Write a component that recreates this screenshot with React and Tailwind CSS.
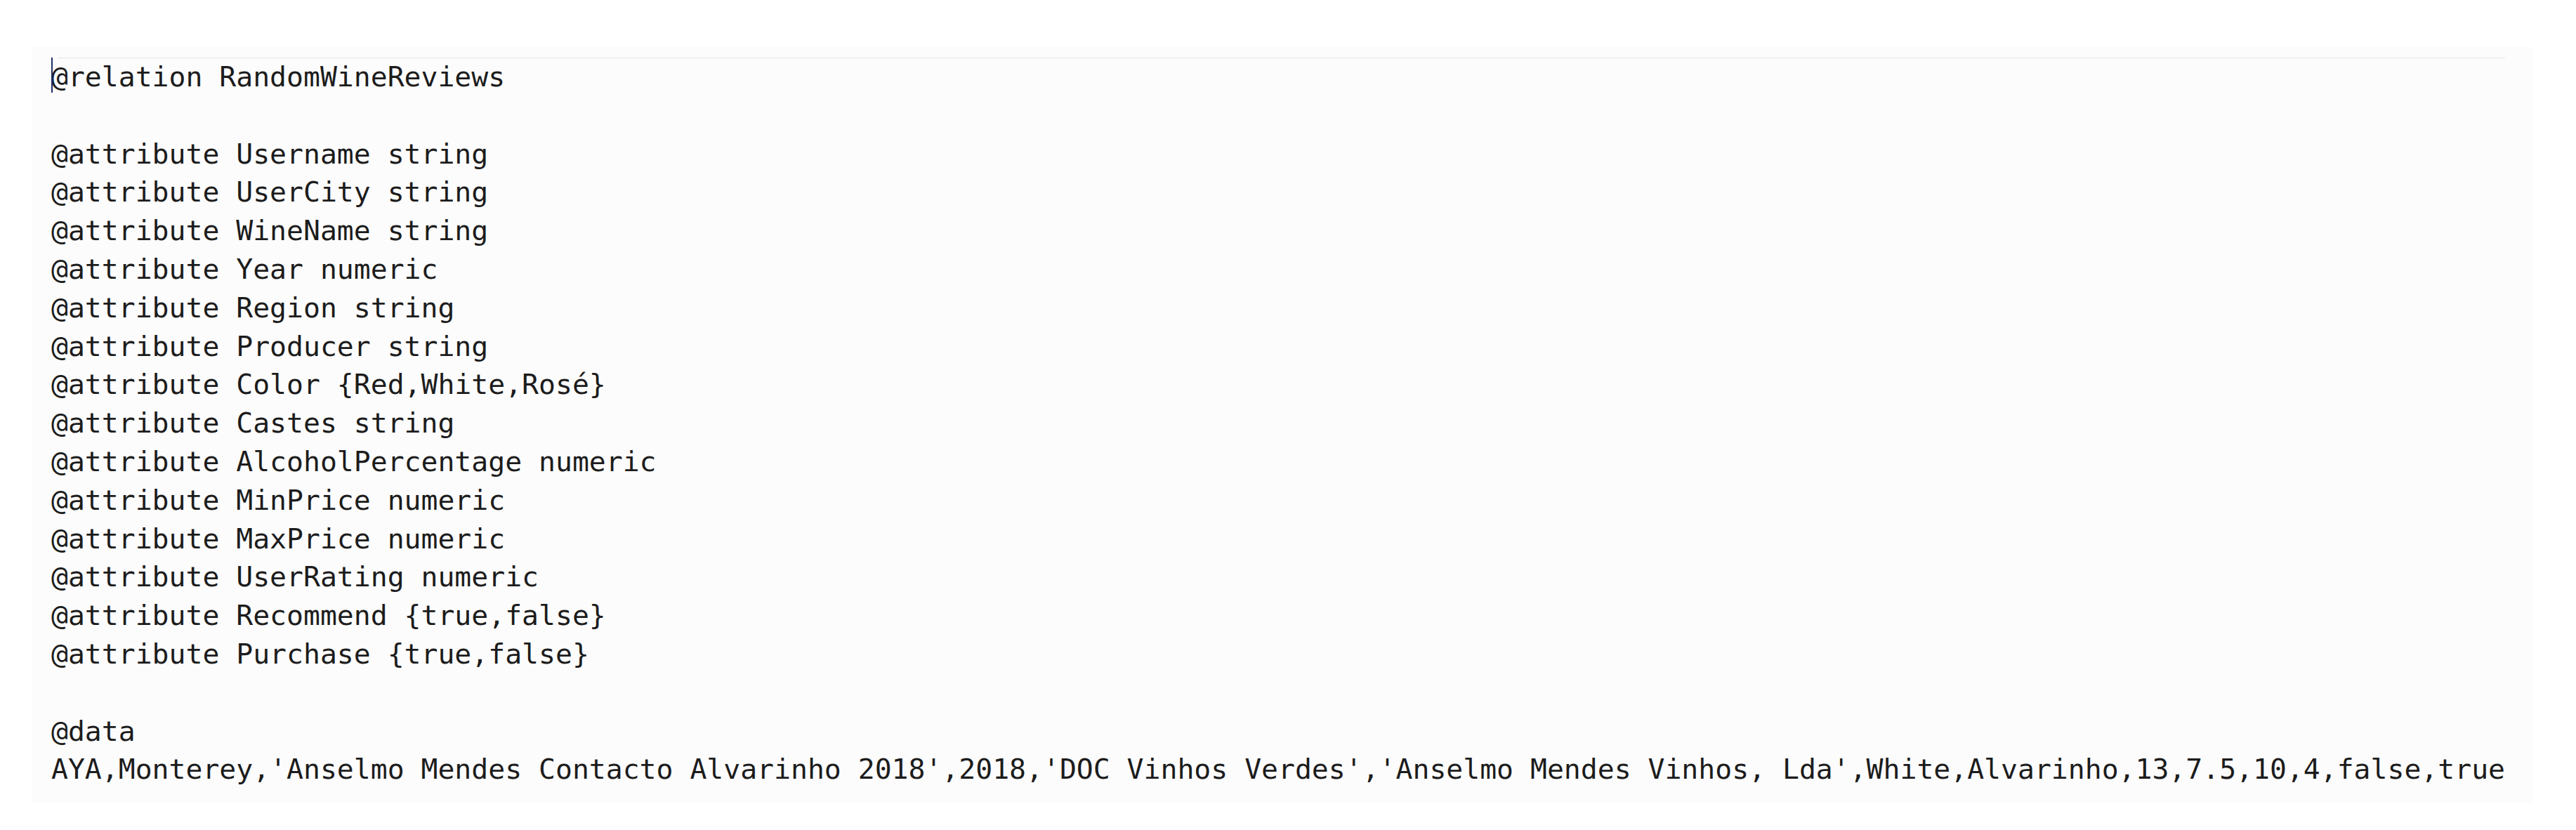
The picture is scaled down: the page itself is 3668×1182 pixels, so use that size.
import React from 'react';

const lines = [
  '@relation RandomWineReviews',
  '',
  '@attribute Username string',
  '@attribute UserCity string',
  '@attribute WineName string',
  '@attribute Year numeric',
  '@attribute Region string',
  '@attribute Producer string',
  '@attribute Color {Red,White,Rosé}',
  '@attribute Castes string',
  '@attribute AlcoholPercentage numeric',
  '@attribute MinPrice numeric',
  '@attribute MaxPrice numeric',
  '@attribute UserRating numeric',
  '@attribute Recommend {true,false}',
  '@attribute Purchase {true,false}',
  '',
  '@data',
  "AYA,Monterey,'Anselmo Mendes Contacto Alvarinho 2018',2018,'DOC Vinhos Verdes','Anselmo Mendes Vinhos, Lda',White,Alvarinho,13,7.5,10,4,false,true",
];

const App = () => (
  <div className="w-[3668px] h-[1182px] bg-white overflow-hidden pt-[67px] pl-[45px]">
    <div className="w-[3562px] h-[1076px] bg-[#fcfcfc] pt-[15px] pl-[28px]">
      <div className="h-px bg-[#e6e4e7] ml-[9px] mr-[40px] -mb-px" />
      <div
        className="text-[39.75px] leading-[54.8px] text-[#1c1c1c] whitespace-pre"
        style={{ fontFamily: '"DejaVu Sans Mono", "Liberation Mono", monospace' }}
      >
        {lines.map((line, i) => (
          <div key={i} className="relative h-[54.8px]">
            {i === 0 && (
              <span className="absolute left-0 top-0 w-[2px] h-[50px] bg-[#1f2f6a]" />
            )}
            {line}
          </div>
        ))}
      </div>
    </div>
  </div>
);

export default App;
